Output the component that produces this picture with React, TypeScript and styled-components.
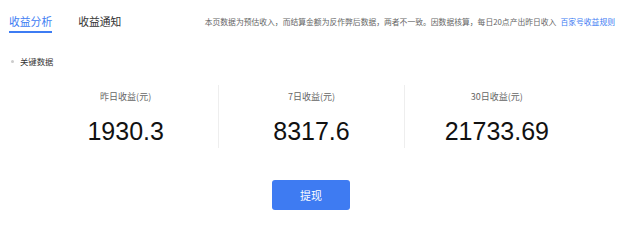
import React from 'react';
import styled, { createGlobalStyle } from 'styled-components';

const GlobalStyle = createGlobalStyle`
  html, body {
    margin: 0;
    padding: 0;
    background: #ffffff;
    font-family: "Liberation Sans", Arial, "Noto Sans CJK SC", sans-serif;
  }
  * {
    box-sizing: border-box;
  }
`;

const stats = [
  { label: '昨日收益(元)', value: '1930.3' },
  { label: '7日收益(元)', value: '8317.6' },
  { label: '30日收益(元)', value: '21733.69' },
];

const App = () => {
  return (
    <Page>
      <GlobalStyle />
      <Header>
        <Tabs>
          <Tab active>收益分析</Tab>
          <Tab>收益通知</Tab>
        </Tabs>
        <Notice>
          本页数据为预估收入，而结算金额为反作弊后数据，两者不一致。因数据核算，每日20点产出昨日收入
          <NoticeLink>百家号收益规则</NoticeLink>
        </Notice>
      </Header>
      <SectionTitle>
        <Dot />
        关键数据
      </SectionTitle>
      <StatRow>
        {stats.map((item) => (
          <StatCell key={item.label}>
            <StatLabel>{item.label}</StatLabel>
            <StatValue>{item.value}</StatValue>
          </StatCell>
        ))}
      </StatRow>
      <Footer>
        <WithdrawButton>提现</WithdrawButton>
      </Footer>
    </Page>
  );
};

export default App;

const Page = styled.div`
  width: 622px;
  height: 235px;
  background: #ffffff;
`;
const Header = styled.div`
  display: flex;
  justify-content: space-between;
  align-items: flex-start;
  height: 34px;
  padding: 0 7px 0 9px;
`;
const Tabs = styled.div`
  display: flex;
  gap: 26px;
`;
const Tab = styled.div<{ active?: boolean }>`
  padding: 15px 0 3px;
  font-size: 10.8px;
  line-height: 13px;
  color: ${({ active }) => (active ? '#3d7cf3' : '#333333')};
  border-bottom: 2px solid ${({ active }) => (active ? '#3d7cf3' : 'transparent')};
  font-family: "Noto Sans CJK SC", sans-serif;
`;
const Notice = styled.div`
  padding-top: 17px;
  font-size: 7.8px;
  line-height: 10px;
  color: #666666;
  white-space: nowrap;
  font-family: "Noto Sans CJK SC", sans-serif;
`;
const NoticeLink = styled.span`
  margin-left: 4px;
  color: #3d7cf3;
`;
const SectionTitle = styled.div`
  display: flex;
  align-items: center;
  gap: 6px;
  margin-top: 21px;
  padding-left: 11px;
  font-size: 8.4px;
  line-height: 12px;
  color: #333333;
  font-family: "Noto Sans CJK SC", sans-serif;
`;
const Dot = styled.span`
  width: 3px;
  height: 3px;
  border-radius: 50%;
  background: #cccccc;
`;
const StatRow = styled.div`
  display: grid;
  grid-template-columns: repeat(3, 1fr);
  margin-top: 18px;
  padding: 0 33px;
`;
const StatCell = styled.div`
  display: flex;
  flex-direction: column;
  align-items: center;
  height: 63px;
  padding-top: 7px;
  & + & {
    border-left: 1px solid #eeeeee;
  }
`;
const StatLabel = styled.div`
  font-size: 9px;
  line-height: 10px;
  color: #666666;
  font-family: "Noto Sans CJK SC", sans-serif;
`;
const StatValue = styled.div`
  margin-top: 14px;
  font-size: 25px;
  line-height: 30px;
  color: #111111;
`;
const Footer = styled.div`
  display: flex;
  justify-content: center;
  margin-top: 32px;
`;
const WithdrawButton = styled.button`
  width: 78px;
  height: 30px;
  border: none;
  border-radius: 3px;
  background: #3e7bf2;
  color: #ffffff;
  font-size: 11px;
  font-family: "Noto Sans CJK SC", sans-serif;
  cursor: pointer;
`;
